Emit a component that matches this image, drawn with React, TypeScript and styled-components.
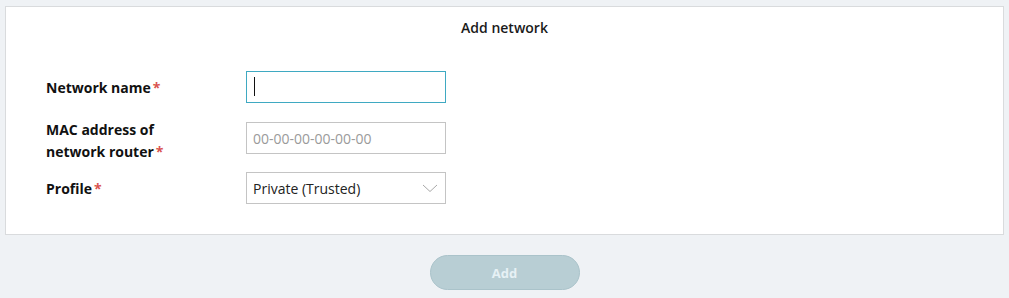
import React from "react";
import styled, { createGlobalStyle } from "styled-components";

const Global = createGlobalStyle`
  html, body { margin: 0; padding: 0; }
  body {
    background: #eff2f5;
    font-family: "Open Sans", "Liberation Sans", Arial, sans-serif;
    color: #111;
  }
  * { box-sizing: border-box; }
`;

const Page = styled.div`
  display: flex;
  flex-direction: column;
  align-items: center;
  padding: 6px 5px 0 5px;
`;

const Card = styled.section`
  width: 100%;
  background: #fff;
  border: 1px solid #d9dbdd;
  padding: 11px 0 30px 40px;
  display: flex;
  flex-direction: column;
`;

const Title = styled.h2`
  margin: 0 0 33px -40px;
  font-size: 14px;
  font-weight: 600;
  line-height: 20px;
  text-align: center;
  color: #1a1a1a;
`;

const Form = styled.div`
  display: flex;
  flex-direction: column;
  gap: 18px;
`;

const Row = styled.div<{ $extraTop?: number }>`
  display: flex;
  align-items: center;
  height: 32px;
  margin-top: ${(p) => p.$extraTop ?? 0}px;
`;

const Label = styled.label<{ $drop?: number }>`
  width: 200px;
  flex: none;
  font-size: 14px;
  font-weight: 700;
  line-height: 22px;
  color: #111;
  margin-top: ${(p) => (p.$drop ?? 0) + 2}px;
`;

const Star = styled.span`
  color: #d9534f;
  margin-left: 2px;
`;

const Field = styled.div`
  position: relative;
  width: 200px;
  height: 32px;
`;

const Caret = styled.span`
  position: absolute;
  left: 8px;
  top: 6px;
  width: 1px;
  height: 19px;
  background: #111;
  pointer-events: none;
`;

const Input = styled.input<{ $focused?: boolean }>`
  width: 200px;
  height: 32px;
  border: 1px solid ${(p) => (p.$focused ? "#3fa9c2" : "#c4c4c4")};
  outline: none;
  padding: 0 6px;
  font-family: "Open Sans", "Liberation Sans", Arial, sans-serif;
  font-size: 14px;
  color: #222;
  background: #fff;
  caret-color: transparent;
  &::placeholder { color: #9a9a9a; }
`;

const Select = styled.div`
  width: 200px;
  height: 32px;
  border: 1px solid #c4c4c4;
  padding: 0 7px 0 6px;
  display: flex;
  align-items: center;
  justify-content: space-between;
  font-size: 14px;
  color: #222;
  background: #fff;
`;

const Footer = styled.div`
  padding-top: 20px;
  display: flex;
  justify-content: center;
`;

const AddButton = styled.button`
  width: 150px;
  height: 35px;
  border-radius: 18px;
  border: 1px solid #aac3ca;
  background: #b8ced4;
  color: #e6f1f5;
  font-family: "Open Sans", "Liberation Sans", Arial, sans-serif;
  font-size: 13px;
  font-weight: 700;
  cursor: default;
`;

const Chevron = () => (
  <svg width="16" height="9" viewBox="0 0 16 9" fill="none">
    <path d="M1 1 L8 7.5 L15 1" stroke="#a8a8a8" strokeWidth="1" />
  </svg>
);

export default function App() {
  return (
    <>
      <Global />
      <Page>
        <Card>
          <Title>Add network</Title>
          <Form>
            <Row>
              <Label>
                Network name<Star>*</Star>
              </Label>
              <Field>
                <Input $focused defaultValue="" />
                <Caret />
              </Field>
            </Row>
            <Row $extraTop={1}>
              <Label $drop={4}>
                MAC address of
                <br />
                network router<Star>*</Star>
              </Label>
              <Input placeholder="00-00-00-00-00-00" />
            </Row>
            <Row>
              <Label>
                Profile<Star>*</Star>
              </Label>
              <Select>
                <span>Private (Trusted)</span>
                <Chevron />
              </Select>
            </Row>
          </Form>
        </Card>
        <Footer>
          <AddButton>Add</AddButton>
        </Footer>
      </Page>
    </>
  );
}
